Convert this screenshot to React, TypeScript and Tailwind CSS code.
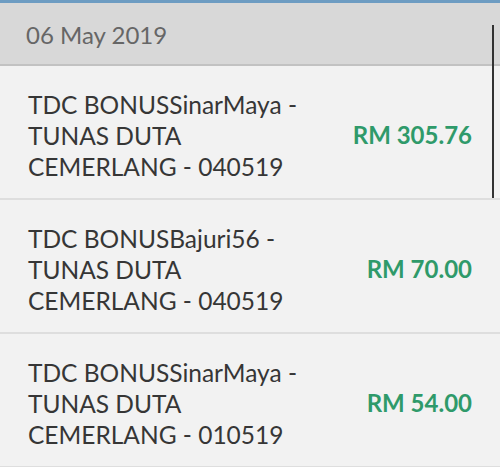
import React from 'react';

const rows = [
  { name: 'TDC BONUSSinarMaya -', org: 'TUNAS DUTA', tail: 'CEMERLANG - 040519', amount: 'RM 305.76' },
  { name: 'TDC BONUSBajuri56 -', org: 'TUNAS DUTA', tail: 'CEMERLANG - 040519', amount: 'RM 70.00' },
  { name: 'TDC BONUSSinarMaya -', org: 'TUNAS DUTA', tail: 'CEMERLANG - 010519', amount: 'RM 54.00' },
];

const App: React.FC = () => {
  return (
    <div className="relative w-[500px] h-[467px] overflow-hidden bg-[#f2f2f2] font-['Lato','Noto_Sans',sans-serif]">
      {/* top strip */}
      <div className="h-[3px] bg-[#6d9cc2]" />

      {/* Date header */}
      <div className="h-[63px] bg-[#d8d8d8] border-b-2 border-[#c2c2c2] flex items-center pl-[26px] pt-[3px]">
        <span className="text-[24px] text-[#666666] leading-none">06 May 2019</span>
      </div>

      {/* Transactions */}
      <ul>
        {rows.map((row, i) => (
          <li
            key={i}
            className="h-[134px] border-b-2 border-[#dedede] flex items-center justify-between pl-[28px] pr-[28px] pt-[6px]"
          >
            <div className="text-[24.5px] leading-[31px] text-[#363636]">
              <p>{row.name}</p>
              <p>{row.org}</p>
              <p>{row.tail}</p>
            </div>
            <p className="text-[24px] font-bold text-[#2f9a6a]">{row.amount}</p>
          </li>
        ))}
      </ul>

      {/* scrollbar */}
      <div className="absolute left-[492px] top-[25px] w-[2px] h-[173px] bg-[#333333]" />
    </div>
  );
};

export default App;
